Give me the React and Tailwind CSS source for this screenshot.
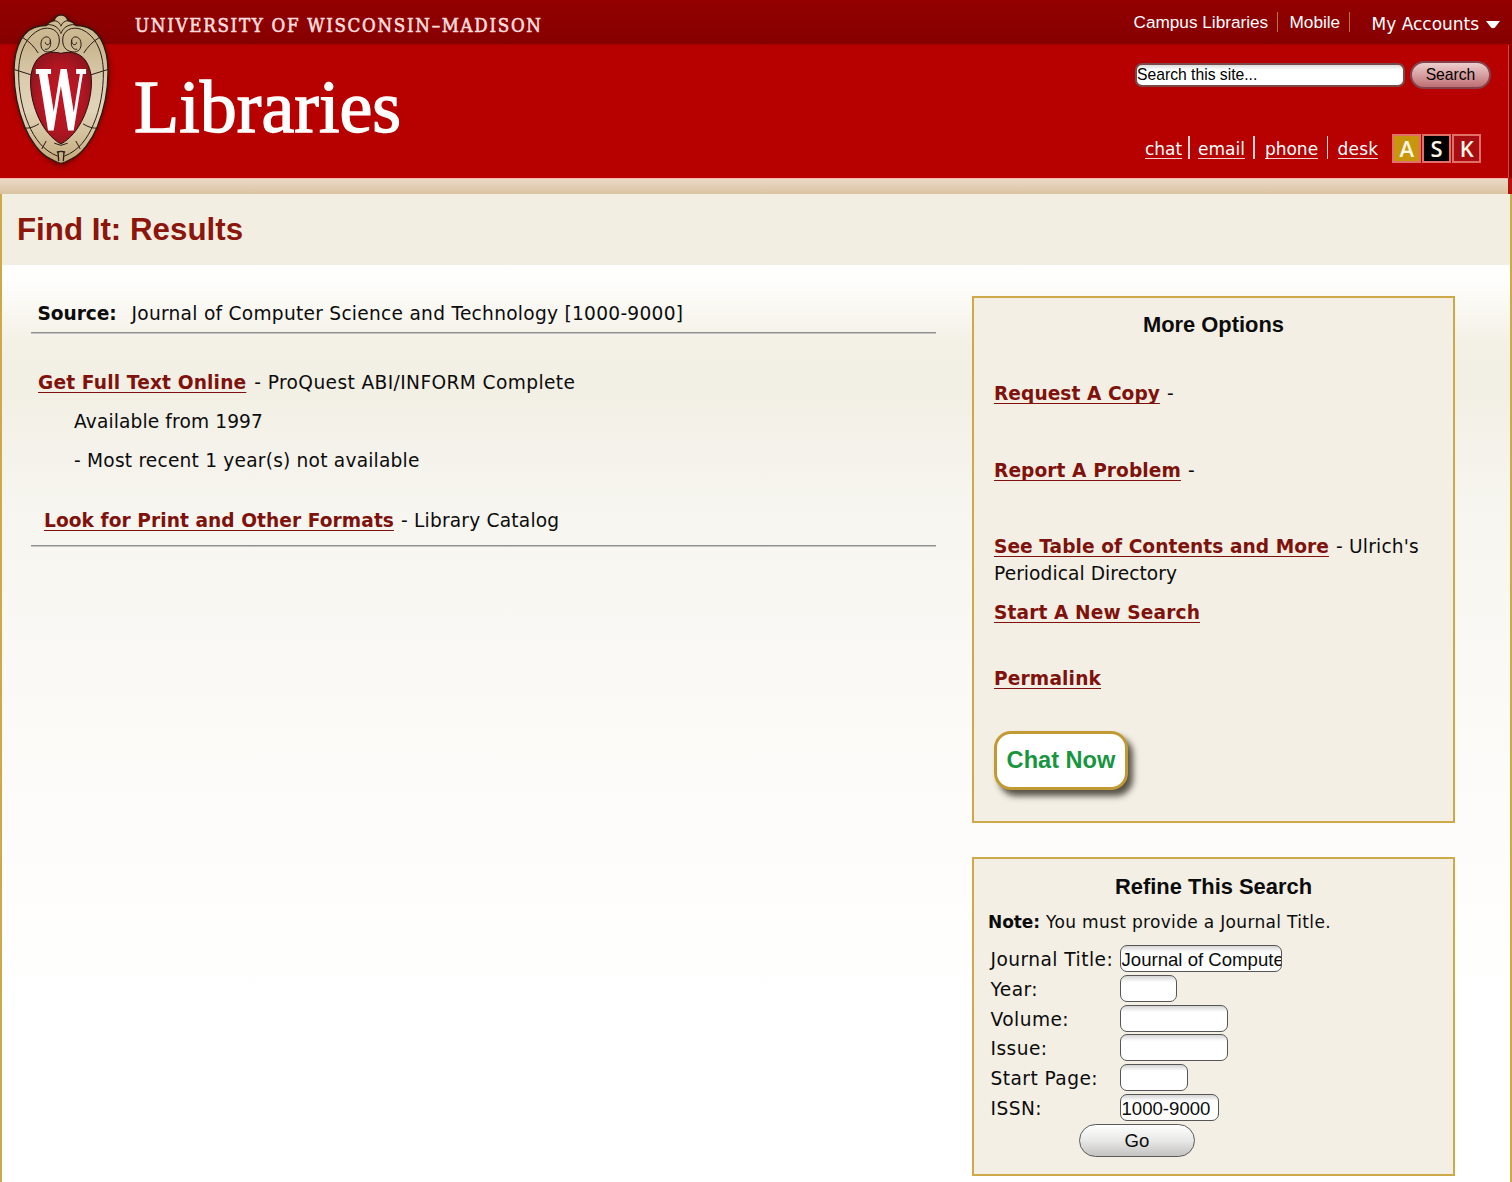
import React from 'react';

function CrestHalf() {
  return (
    <g stroke="#2b1a14" strokeWidth="4" fill="none" strokeLinecap="round" strokeLinejoin="round">
      <path
        d="M183 490 C170 488 164 482 150 476 C120 462 90 420 74 380 C54 330 42 270 42 215 C42 135 72 84 120 78 C132 77 138 78 142 74 C144 66 154 64 162 62 C166 48 174 45 183 45 L184 45 L184 490 Z"
        fill="url(#stone)"
        stroke="none"
      />
      <path d="M183 490 C170 488 164 482 150 476 C120 462 90 420 74 380 C54 330 42 270 42 215 C42 135 72 84 120 78 C132 77 138 78 142 74 C144 66 154 64 162 62 C166 48 174 45 183 45" />
      <path
        strokeWidth="3"
        d="M172 468 C130 452 104 416 86 374 C66 328 55 270 56 214 C57 160 76 108 122 88 C150 78 178 90 178 120 C178 146 162 156 142 156 C126 154 120 140 124 124 C128 108 148 106 151 120 C153 134 138 140 136 128"
      />
      <path strokeWidth="3" d="M151 122 C156 138 146 150 136 148" />
      <path strokeWidth="3" d="M142 74 C162 72 178 84 183 100" />
      <path strokeWidth="3" d="M162 62 C172 62 180 68 183 78" />
      <path strokeWidth="3" d="M70 114 C88 124 102 140 114 158 M44 209 L92 224 M72 384 C86 386 100 382 116 372" />
      <path strokeWidth="3" d="M138 424 L126 446 M164 430 L183 436" />
      <path strokeWidth="4" d="M174 456 L176 482 M172 456 L183 454" />
    </g>
  );
}

function Crest() {
  return (
    <svg viewBox="0 0 402 534" className="block h-[178px] w-[134px] shrink-0" aria-label="UW crest">
      <defs>
        <linearGradient id="stone" x1="0" y1="0" x2="0" y2="1">
          <stop offset="0" stopColor="#d2bd94" />
          <stop offset="0.2" stopColor="#c9b68f" />
          <stop offset="0.45" stopColor="#dccdb0" />
          <stop offset="0.65" stopColor="#e0d3b8" />
          <stop offset="1" stopColor="#c4aa7c" />
        </linearGradient>
        <radialGradient id="ruby" cx="0.5" cy="0.5" r="0.6">
          <stop offset="0" stopColor="#c41424" />
          <stop offset="0.6" stopColor="#b01622" />
          <stop offset="1" stopColor="#86141c" />
        </radialGradient>
        <filter id="glow" x="-20%" y="-20%" width="140%" height="140%">
          <feGaussianBlur stdDeviation="8" />
        </filter>
      </defs>
      <path
        d="M183 500 C120 490 38 350 38 218 C38 130 80 74 140 70 C160 40 206 40 226 70 C286 74 330 130 330 218 C330 350 248 490 183 500 Z"
        fill="#4a0000"
        opacity="0.55"
        filter="url(#glow)"
      />
      <CrestHalf />
      <g transform="translate(366 0) scale(-1 1)">
        <CrestHalf />
      </g>
      <path
        d="M183 160 C214 152 238 160 254 178 C270 200 276 225 274 258 C271 320 240 400 183 432 C126 400 95 320 92 258 C90 225 96 200 112 178 C128 160 152 152 183 160 Z"
        fill="url(#ruby)"
        stroke="#2e0d0d"
        strokeWidth="3"
      />
      <text
        x="109"
        y="394"
        fontSize="252"
        textLength="148"
        lengthAdjust="spacingAndGlyphs"
        fill="#fff"
        className="font-['DejaVu_Serif',serif] font-bold"
      >
        W
      </text>
    </svg>
  );
}

const linkBase = 'font-bold text-[#7f120c] underline decoration-1 underline-offset-[2.5px] [text-decoration-skip-ink:none]';

function Link({ className, children }) {
  return (
    <a href="#" className={`${linkBase} ${className}`}>
      {children}
    </a>
  );
}

const contactLinks = [
  ['chat', 'tracking-[-0.05px]', ''],
  ['email', 'tracking-normal', 'ml-[6px] mr-[8.5px]'],
  ['phone', 'tracking-normal', 'ml-[8.5px] mr-[10px]'],
  ['desk', 'tracking-[0.15px]', 'ml-[8.5px] mr-[9.5px]'],
];

function Header() {
  return (
    <header>
      <div className="flex h-[178px] bg-[linear-gradient(to_bottom,#930000_0,#860000_44px,#a80000_44px,#b70000_46px,#b70000_178px)]">
        <Crest />
        <div className="flex w-[500px] flex-col">
          <div className="h-[44px] pl-[1px] pt-[13px] font-['DejaVu_Serif_Condensed','DejaVu_Serif',serif] text-[18.6px] leading-[26px] tracking-[1.7px] whitespace-nowrap text-[#fbdcdc] [-webkit-text-stroke:0.6px_#fbdcdc]">
            UNIVERSITY OF WISCONSIN–MADISON
          </div>
          <div className="pt-[23px] font-['Liberation_Serif',serif] text-[74px] leading-[80px] text-white [-webkit-text-stroke:1.4px_white]">
            Libraries
          </div>
        </div>
        <div className="ml-auto flex w-[376px] flex-col text-white">
          <div className="flex h-[44px] pl-[1.5px] pt-[12px] font-['Liberation_Sans',sans-serif] text-[17.2px] leading-[20px] whitespace-nowrap">
            <span className="h-[20px] w-[144px] border-r border-[#b5763c]">Campus Libraries</span>
            <span className="ml-[12px] h-[20px] w-[60px] border-r border-[#b5763c]">Mobile</span>
            <span className="ml-[22px] pt-[2px] font-['DejaVu_Sans',sans-serif] text-[17px]">My Accounts</span>
            <svg viewBox="0 0 14 8" className="ml-[7px] mt-[9px] h-[8px] w-[14px] shrink-0">
              <path d="M0 0 H14 L9 6.5 Q7 8 5 6.5 Z" fill="#fff" />
            </svg>
          </div>
          <div className="mt-[17px] flex h-[28px] items-center pl-[3px] font-['Liberation_Sans',sans-serif] text-[15.7px] text-black">
            <div className="flex h-[24px] w-[270px] items-center rounded-[7px] border-2 border-[#7a4a4a] bg-[linear-gradient(to_bottom,#dcdcdc_0,#fff_5px)] leading-none">
              Search this site...
            </div>
            <button className="ml-[5px] h-[28px] w-[81px] rounded-full border-2 border-[#84434a] bg-linear-to-b from-[#edcfd0] to-[#bd6f73] leading-none">
              Search
            </button>
          </div>
          <div className="mt-[45px] flex h-[30px] pl-[13px] font-['DejaVu_Sans',sans-serif] text-[17px]">
            {contactLinks.map(([name, tracking, gap], i) => (
              <React.Fragment key={name}>
                {i > 0 && <span className={`mt-[2px] h-[23px] w-[1.5px] bg-[#f6d5d5] ${gap}`} />}
                <a
                  href="#"
                  className={`mt-[5px] h-[20px] border-b border-[#f3d0d0] leading-[20px] ${tracking}`}
                >
                  {name}
                </a>
              </React.Fragment>
            ))}
            <span className="ml-[14px] flex gap-px font-['Open_Sans',sans-serif] text-[22px] leading-[25px] font-semibold text-[#fff6e6]">
              <span className="h-[29px] w-[29px] border-2 border-[#e07068] bg-[#c8960c] text-center">A</span>
              <span className="h-[29px] w-[29px] border-2 border-[#e07068] bg-black text-center">S</span>
              <span className="h-[29px] w-[29px] border-2 border-[#e07068] bg-[#a80d12] text-center">K</span>
            </span>
          </div>
        </div>
        <div className="mt-[45px] w-[4px] shrink-0 border-l border-[#c84a4a] bg-[#8e0000]" />
      </div>
      <div className="flex h-[16px]">
        <div className="grow border-t border-[#f8b9ac] bg-linear-to-b from-[#ebd9c8] to-[#d9c3a0]" />
        <div className="w-[4px] bg-[#b8100c]" />
      </div>
    </header>
  );
}

const rule = 'h-[2px] border-t border-[#8f9090] bg-[#c4c4c0]';

function Results() {
  return (
    <section className="w-[905px] pt-[35px] leading-[27px]">
      <p className="pl-[6.5px]">
        <b className="tracking-[-0.09px]">Source:</b>
        <span className="ml-[15px] tracking-[0.27px]">Journal of Computer Science and Technology [1000-9000]</span>
      </p>
      <div className={`mt-[5px] ${rule}`} />
      <p className="mt-[35px] pl-[7px]">
        <Link className="tracking-[0.15px]">Get Full Text Online</Link>
        <span className="ml-[8px] tracking-[0.39px]">- ProQuest ABI/INFORM Complete</span>
      </p>
      <p className="mt-[12px] pl-[43px] tracking-[0.13px]">Available from 1997</p>
      <p className="mt-[12px] pl-[43px] tracking-[0.21px]">- Most recent 1 year(s) not available</p>
      <p className="mt-[33px] pl-[13px]">
        <Link className="tracking-[0.06px]">Look for Print and Other Formats</Link>
        <span className="ml-[7px] tracking-[0.2px]">- Library Catalog</span>
      </p>
      <div className={`mt-[11px] ${rule}`} />
    </section>
  );
}

function Heading({ children }) {
  return (
    <h2 className="text-center font-['Liberation_Sans',sans-serif] text-[21.9px] leading-[26px] font-bold">{children}</h2>
  );
}

function MoreOptions() {
  return (
    <section className="h-[527px] border-2 border-[#cda949] bg-[#f3efe4] px-[20px] pt-[14px] leading-[27px]">
      <Heading>More Options</Heading>
      <p className="mt-[42px]">
        <Link className="tracking-[0.05px]">Request A Copy</Link>
        <span className="ml-[7px]">-</span>
      </p>
      <p className="mt-[50px]">
        <Link className="tracking-[0.08px]">Report A Problem</Link>
        <span className="ml-[7px]">-</span>
      </p>
      <p className="mt-[49px]">
        <Link className="tracking-[0.05px]">See Table of Contents and More</Link>
        <span className="ml-[7px] tracking-[0.2px]">- Ulrich's</span>
        <br />
        <span className="tracking-[0.08px]">Periodical Directory</span>
      </p>
      <p className="mt-[12px]">
        <Link className="tracking-[0.11px]">Start A New Search</Link>
      </p>
      <p className="mt-[39px]">
        <Link className="tracking-[0.15px]">Permalink</Link>
      </p>
      <button className="mt-[39px] flex h-[59px] w-[134px] items-center justify-center rounded-[17px] border-[3px] border-[#c29a34] bg-white pt-px font-['Liberation_Sans',sans-serif] text-[23.6px] leading-none font-bold whitespace-nowrap text-[#17963f] shadow-[5px_6px_6px_rgba(60,55,45,0.85)]">
        Chat Now
      </button>
    </section>
  );
}

const fields = [
  { label: 'Journal Title:', value: 'Journal of Computer', width: 'w-[162px]' },
  { label: 'Year:', value: '', width: 'w-[57px]' },
  { label: 'Volume:', value: '', width: 'w-[108px]' },
  { label: 'Issue:', value: '', width: 'w-[108px]' },
  { label: 'Start Page:', value: '', width: 'w-[68px]' },
  { label: 'ISSN:', value: '1000-9000', width: 'w-[99px]' },
];

function RefineSearch() {
  return (
    <section className="mt-[34px] h-[319px] border-2 border-[#cda949] bg-[#f3efe4] pt-[15px]">
      <Heading>Refine This Search</Heading>
      <p className="mt-[10px] pl-[14px] text-[17px] leading-[24px]">
        <b className="tracking-[-0.08px]">Note:</b>
        <span className="ml-[6px] tracking-[0.33px]">You must provide a Journal Title.</span>
      </p>
      <div className="mt-[11px] pl-[16.5px]">
        {fields.map((f) => (
          <label key={f.label} className="flex h-[29.8px] items-start">
            <span className="w-[129px] leading-[30px] tracking-[0.45px] whitespace-nowrap">{f.label}</span>
            <span
              className={`flex h-[27px] items-center overflow-hidden rounded-[7px] border-[1.5px] border-[#555] bg-[linear-gradient(to_bottom,#d4d4d4_0,#fff_6px)] pt-[3px] pl-px font-['Liberation_Sans',sans-serif] text-[18.6px] leading-none whitespace-nowrap ${f.width}`}
            >
              {f.value}
            </span>
          </label>
        ))}
      </div>
      <button className="ml-[105px] h-[33px] w-[116px] rounded-full border-[1.5px] border-[#5a5a5a] bg-linear-to-b from-white via-[#e8e8e6] to-[#c4c3c1] pt-[2px] font-['Liberation_Sans',sans-serif] text-[18.6px] leading-none">
        Go
      </button>
    </section>
  );
}

export default function App() {
  return (
    <div className="h-[1182px] w-[1512px] overflow-hidden bg-white font-['DejaVu_Sans',sans-serif] text-[18.6px] text-[#0c0c0c]">
      <Header />
      <main className="h-[988px] border-x-2 border-[#cda949]">
        <div className="h-[71px] bg-[#f2efe2] pt-[18px] pl-[15px]">
          <h1 className="font-['Liberation_Sans',sans-serif] text-[31.3px] leading-[36px] font-bold text-[#8c150c]">
            Find It: Results
          </h1>
        </div>
        <div className="flex h-[917px] justify-between bg-[linear-gradient(to_bottom,#fff_0,#fefefc_15px,#f3f0e5_80px,#f2efe4_120px,#f6f5ef_240px,#faf9f5_400px,#fdfcfa_560px,#fff_740px)] pl-[29px]">
          <Results />
          <aside className="mr-[55px] w-[483px] pt-[31px]">
            <MoreOptions />
            <RefineSearch />
          </aside>
        </div>
      </main>
    </div>
  );
}
